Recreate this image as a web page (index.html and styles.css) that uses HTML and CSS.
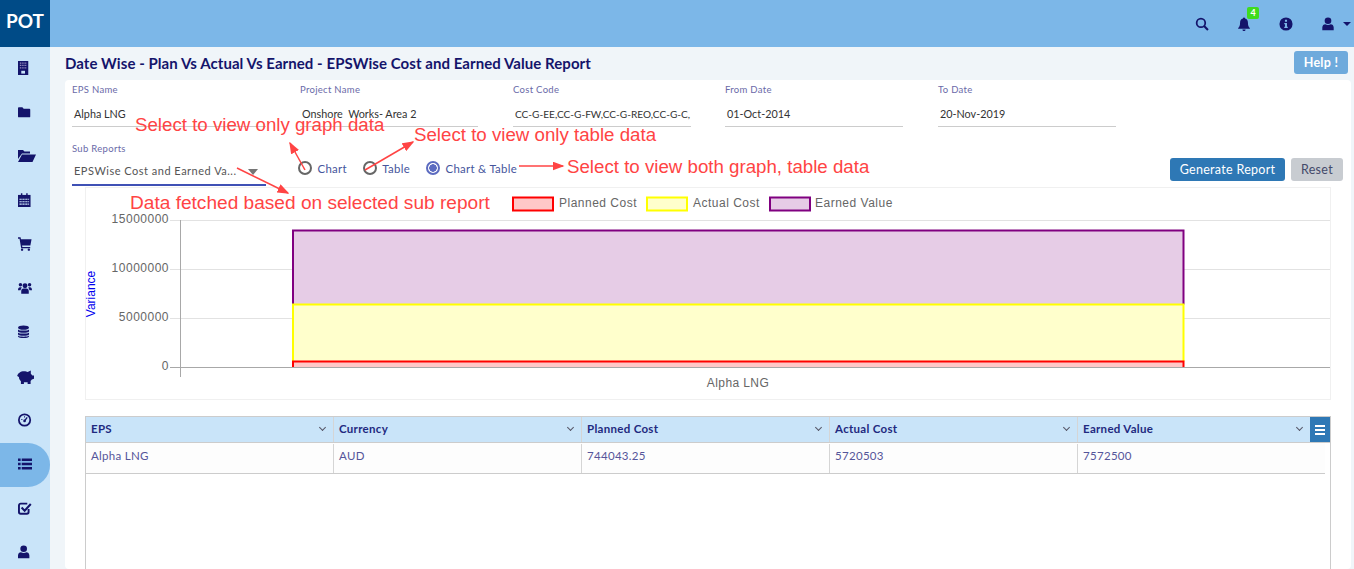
FILE: index.html
```html
<!DOCTYPE html>
<html lang="en">
<head>
    <meta charset="UTF-8">
    <title>Date Wise - Plan Vs Actual Vs Earned</title>
    <link rel="stylesheet" href="styles.css">
</head>
<body>
    <header class="topbar">
        <div class="logo">POT</div>
        <div class="top-icons">
            <svg class="top-icon" viewBox="0 0 16 16"><circle cx="6.8" cy="6.8" r="4.9" fill="none" stroke="#14146b" stroke-width="2"/><path d="M10.400 10.400 14.800 14.800" stroke="#14146b" stroke-width="2.400"/></svg>
            <span class="bell">
                <svg class="top-icon" viewBox="0 0 16 16"><path d="M8 .500a1.200 1.200 0 0 1 1.200 1.300C11.500 2.400 12.500 4.300 12.500 6.500c0 3.500.8 4.700 2.200 6V13.500H1.300v-1c1.400-1.300 2.200-2.500 2.200-6 0-2.200 1-4.100 3.300-4.700A1.200 1.200 0 0 1 8 .500ZM6.200 14.300h3.600a1.800 1.800 0 0 1-3.600 0Z" fill="#14146b"/></svg>
                <span class="badge">4</span>
            </span>
            <svg class="top-icon" viewBox="0 0 16 16"><path fill-rule="evenodd" d="M8 .500a7.500 7.500 0 1 1 0 15A7.500 7.500 0 0 1 8 .500ZM6.800 3v2.300h2.400V3ZM6 6.800v1.400h.9v3H6v1.400h4v-1.400h-.9V6.800Z" fill="#14146b"/></svg>
            <span class="user-menu">
                <svg class="top-icon" viewBox="0 0 16 16"><circle cx="8" cy="4.300" r="3.800" fill="#14146b"/><path d="M1.500 15v-3c0-2.300 1.600-3.700 3.400-3.700 1.800 1.100 4.400 1.100 6.200 0 1.800 0 3.400 1.400 3.400 3.700v3Z" fill="#14146b"/></svg>
                <span class="caret"></span>
            </span>
        </div>
    </header>

    <div class="layout">
        <nav class="sidebar">
            <a class="nav-item"><svg class="nav-icon" viewBox="2.500 .5 15 15"><path d="M2.500 .5h11v15h-11z" fill="#14146b"/><path d="M4.500 2.800h7M4.500 5.300h7M4.500 7.800h7" stroke="#9a8fc0" stroke-width="1.300" stroke-dasharray="1.200 .7"/><path d="M6 11h4v3H6z" fill="#c9e4f9"/></svg></a>
            <a class="nav-item"><svg class="nav-icon" viewBox="1 0 16 16"><path d="M1 3.500a1 1 0 0 1 1-1h4l1.500 1.800H14a1 1 0 0 1 1 1V13a1 1 0 0 1-1 1H2a1 1 0 0 1-1-1Z" fill="#14146b"/></svg></a>
            <a class="nav-item"><svg class="nav-icon-open" viewBox="0 0 18 14"><path d="M0 1h5l1.500 1.500H12v2H4L0 10ZM4 5.500h14L14.500 13H0Z" fill="#14146b"/></svg></a>
            <a class="nav-item"><svg class="nav-icon" viewBox="1.500 .5 14.500 14.500"><path d="M1.500 2.500h13V15h-13z" fill="#14146b"/><path d="M4.500 .8h1.500v2.700H4.500zM10 .8h1.500v2.700H10z" fill="#14146b"/><path d="M3 7h10M3 9.500h10M3 12h10" stroke="#c9e4f9" stroke-width="1.100" stroke-dasharray="2.400 .6"/></svg></a>
            <a class="nav-item"><svg class="nav-icon" viewBox=".5 .5 15.500 15.500"><path d="M.5 .8h2.800L3.800 3H15.500l-1.300 7H5l.3 1.500h8.700V13H4L2.200 2.300H.5Z" fill="#14146b"/><circle cx="5" cy="14.500" r="1.300" fill="#14146b"/><circle cx="12.500" cy="14.500" r="1.300" fill="#14146b"/></svg></a>
            <a class="nav-item"><svg class="nav-icon" viewBox="0 0 16 16"><circle cx="8" cy="5.500" r="2.800" fill="#14146b"/><circle cx="2.800" cy="4.300" r="2" fill="#14146b"/><circle cx="13.200" cy="4.300" r="2" fill="#14146b"/><path d="M3.700 14.500v-3C3.700 9.500 5 8.600 6.300 8.600h3.400c1.300 0 2.600.9 2.600 2.900v3ZM0 10.500c0-2.300.8-3.400 2.300-3.400h2L2.800 10.500ZM16 10.500c0-2.300-.8-3.400-2.300-3.400h-2l1.500 3.400Z" fill="#14146b"/></svg></a>
            <a class="nav-item"><svg class="nav-icon" viewBox="1.700 0 16 16"><ellipse cx="8" cy="3" rx="6.300" ry="2.500" fill="#14146b"/><path d="M1.700 5c1 1.800 11.600 1.800 12.600 0v2.300c-1 2-11.600 2-12.600 0ZM1.700 8.500c1 1.800 11.600 1.800 12.600 0v2.300c-1 2-11.600 2-12.600 0ZM1.700 12c1 1.800 11.600 1.800 12.600 0v1c-1 2.600-11.600 2.600-12.600 0Z" fill="#14146b"/></svg></a>
            <a class="nav-item"><svg class="nav-icon-pig" viewBox="0 0 16 16"><path d="M.2 7.500c.5-2.500 3-4.500 6.500-4.500 1.500 0 2.500.3 3.300.8L13 2.300v3l1.500 1.700H16v3l-2 .8-1.200 1.500v2.700h-2.800v-1.500H6.500v1.500H3.700v-2.500C2.500 11.300 1.800 10 1.800 8.500Z" fill="#14146b"/></svg></a>
            <a class="nav-item"><svg class="nav-icon" viewBox=".5 0 16 16"><circle cx="8" cy="8" r="6.500" fill="none" stroke="#14146b" stroke-width="2"/><path d="M8 9 11 5" stroke="#14146b" stroke-width="1.600"/><circle cx="8" cy="9" r="1.500" fill="#14146b"/><path d="M4.300 7.500h1.200M7.400 4.400h1.200" stroke="#14146b" stroke-width="1.200"/></svg></a>
            <a class="nav-item active"><svg class="nav-icon" viewBox=".5 .5 15 15"><path d="M.5 2h2.800v2.800H.5zM.5 6.600h2.800v2.800H.5zM.5 11.200h2.800V14H.5zM4.500 2h11v2.800h-11zM4.500 6.600h11v2.800h-11zM4.500 11.200h11V14h-11z" fill="#14146b"/></svg></a>
            <a class="nav-item"><svg class="nav-icon" viewBox=".4 0 16 16"><path d="M12.500 9v3.500a2 2 0 0 1-2 2H3.500a2 2 0 0 1-2-2V5a2 2 0 0 1 2-2h7.500" fill="none" stroke="#14146b" stroke-width="2.200"/><path d="M4.500 7.500 8 11 15 3.500" fill="none" stroke="#14146b" stroke-width="2.400"/></svg></a>
            <a class="nav-item"><svg class="nav-icon" viewBox="1.500 0 16 16"><circle cx="8" cy="4.300" r="3.800" fill="#14146b"/><path d="M1.500 15v-3c0-2.300 1.600-3.700 3.400-3.700 1.800 1.100 4.400 1.100 6.200 0 1.800 0 3.400 1.400 3.400 3.700v3Z" fill="#14146b"/></svg></a>
        </nav>

        <main class="content">
            <div class="page-head">
                <h1>Date Wise - Plan Vs Actual Vs Earned - EPSWise Cost and Earned Value Report</h1>
                <button class="btn-help">Help !</button>
            </div>

            <section class="card">
                <div class="filters">
                    <div class="field field-first">
                        <label>EPS Name</label>
                        <div class="value">Alpha LNG</div>
                    </div>
                    <div class="field">
                        <label>Project Name</label>
                        <div class="value">Onshore&nbsp; Works- Area 2</div>
                    </div>
                    <div class="field">
                        <label>Cost Code</label>
                        <div class="value value-code">CC-G-EE,CC-G-FW,CC-G-REO,CC-G-C,</div>
                    </div>
                    <div class="field">
                        <label>From Date</label>
                        <div class="value">01-Oct-2014</div>
                    </div>
                    <div class="field">
                        <label>To Date</label>
                        <div class="value">20-Nov-2019</div>
                    </div>
                </div>

                <div class="options">
                    <div class="field field-first">
                        <label>Sub Reports</label>
                        <div class="value value-select">EPSWise Cost and Earned Va...<span class="select-arrow"></span></div>
                    </div>
                    <div class="radios">
                        <span class="radio"><i class="dot"></i>Chart</span>
                        <span class="radio"><i class="dot"></i>Table</span>
                        <span class="radio checked"><i class="dot"></i>Chart &amp; Table</span>
                    </div>
                    <div class="actions">
                        <button class="btn-generate">Generate Report</button>
                        <button class="btn-reset">Reset</button>
                    </div>
                </div>

                <div class="chart">
                    <svg width="1246" height="213" viewBox="85 187 1246 213">
                        <g class="legend-box">
                            <rect x="513" y="197.500" width="40" height="13" fill="#ffc8c8" stroke="#f00" stroke-width="2"/>
                            <rect x="647" y="197.500" width="40" height="13" fill="#ffffcc" stroke="#ff0" stroke-width="2"/>
                            <rect x="770" y="197.500" width="40" height="13" fill="#e6cce6" stroke="#800080" stroke-width="2"/>
                        </g>
                        <text class="legend-text" x="559" y="206.500">Planned Cost</text>
                        <text class="legend-text" x="693" y="206.500">Actual Cost</text>
                        <text class="legend-text" x="815" y="206.500">Earned Value</text>

                        <path d="M170 220.500H1330M170 269.500H1330M170 318.500H1330" stroke="#e2e2e2"/>
                        <rect x="293" y="230.500" width="890" height="74" fill="#e6cce6"/>
                        <rect x="293" y="304.500" width="890" height="57" fill="#ffffcc"/>
                        <rect x="293" y="361.500" width="890" height="6" fill="#ffc8c8"/>
                        <path d="M293 304.500V230.500H1183.500V304.500" fill="none" stroke="#800080" stroke-width="2"/>
                        <path d="M293 361.500V304.500H1183.500V361.500" fill="none" stroke="#ff0" stroke-width="2"/>
                        <path d="M293 367V361.500H1183.500V367" fill="none" stroke="#f00" stroke-width="2"/>
                        <path d="M180.500 220V377M170 367.500H1330" stroke="#a8a8a8"/>

                        <text class="tick" x="169" y="223">15000000</text>
                        <text class="tick" x="169" y="272">10000000</text>
                        <text class="tick" x="169" y="321">5000000</text>
                        <text class="tick" x="169" y="370">0</text>
                        <text class="axis-title" transform="translate(95 294) rotate(-90)">Variance</text>
                        <text class="x-label" x="738" y="387">Alpha LNG</text>
                    </svg>
                </div>

                <div class="grid">
                    <div class="grid-head">
                        <div class="col">EPS<span class="chev"></span></div>
                        <div class="col">Currency<span class="chev"></span></div>
                        <div class="col">Planned Cost<span class="chev"></span></div>
                        <div class="col">Actual Cost<span class="chev"></span></div>
                        <div class="col">Earned Value<span class="chev"></span></div>
                        <div class="grid-menu"><span></span><span></span><span></span></div>
                    </div>
                    <div class="grid-row">
                        <div class="col">Alpha LNG</div>
                        <div class="col">AUD</div>
                        <div class="col">744043.25</div>
                        <div class="col">5720503</div>
                        <div class="col">7572500</div>
                    </div>
                </div>
            </section>
        </main>
    </div>

    <!-- annotations drawn over the screenshot -->
    <div class="note note-graph">Select to view only graph data</div>
    <div class="note note-table">Select to view only table data</div>
    <div class="note note-both">Select to view both graph, table data</div>
    <div class="note note-data">Data fetched based on selected sub report</div>
    <svg class="arrows" width="1354" height="569">
        <defs>
            <marker id="head" markerWidth="8" markerHeight="6" refX="7" refY="3" orient="auto">
                <path d="M0 0 8 3 0 6Z" fill="#f44"/>
            </marker>
        </defs>
        <path d="M305 170 290 143" marker-end="url(#head)"/>
        <path d="M365 170 413 142" marker-end="url(#head)"/>
        <path d="M519 166H563" marker-end="url(#head)"/>
        <path d="M237 168 288 193" marker-end="url(#head)"/>
    </svg>
</body>
</html>
```

FILE: styles.css
```css
html, body {
    margin: 0;
    height: 100%;
    overflow: hidden;
}

body {
    position: relative;
    font-family: 'Lato', sans-serif;
    background: #f0f5f9;
    color: #14146b;
}

.topbar {
    display: flex;
    justify-content: space-between;
    height: 47px;
    background: #7cb7e8;
}

.logo {
    width: 50px;
    background: #004b87;
    color: #fff;
    font-size: 19px;
    font-weight: bold;
    line-height: 41px;
    text-align: center;
}

.top-icons {
    display: flex;
    align-items: center;
    gap: 28px;
    padding-right: 3px;
}

.top-icon {
    display: block;
    width: 14px;
    height: 14px;
}

.bell {
    position: relative;
}

.badge {
    position: absolute;
    top: -10px;
    left: 10px;
    width: 12px;
    height: 12px;
    border-radius: 2px;
    background: #3fdc1e;
    color: #fff;
    font-size: 9px;
    font-weight: bold;
    line-height: 12px;
    text-align: center;
}

.user-menu {
    display: flex;
    align-items: center;
    gap: 8px;
}

.caret {
    width: 0;
    height: 0;
    border-left: 4px solid transparent;
    border-right: 4px solid transparent;
    border-top: 4px solid #14146b;
}

.layout {
    display: flex;
    height: 522px;
}

.sidebar {
    flex: 0 0 50px;
    background: #c9e4f9;
}

.nav-item {
    display: flex;
    align-items: center;
    height: 44px;
    padding-left: 18px;
}

.nav-item.active {
    background: #7cb7e8;
    border-radius: 0 22px 22px 0;
}

.nav-icon {
    width: 14px;
    height: 14px;
    margin-top: -2px;
}

.nav-icon-open {
    width: 18px;
    height: 14px;
    margin-top: -2px;
}

.nav-icon-pig {
    width: 17px;
    height: 17px;
    margin: -2px 0 0 -1px;
}

.content {
    flex: 1;
    padding: 4px 3px 0 15px;
    min-width: 0;
}

.page-head {
    display: flex;
    justify-content: space-between;
    align-items: center;
    height: 23px;
    margin: 0 3px 6px 0;
}

h1 {
    margin: 0;
    font-size: 15px;
    font-weight: bold;
    letter-spacing: 0.06px;
    color: #14146b;
}

button {
    border: none;
    border-radius: 3px;
    font-family: 'Lato', sans-serif;
    font-size: 12.5px;
    cursor: pointer;
}

.btn-help {
    width: 54px;
    height: 23px;
    background: #6eaadc;
    color: #fff;
    font-weight: bold;
    letter-spacing: 0.3px;
}

.card {
    height: 489px;
    padding: 0 7px;
    background: #fff;
    border-radius: 4px;
}

.filters {
    display: grid;
    grid-template-columns: 228px 213px 212px 213px 213px;
    padding-top: 4px;
}

.field label {
    display: block;
    height: 12px;
    font-size: 9.5px;
    line-height: 12px;
    letter-spacing: 0.3px;
    color: #6a6aa8;
}

.value {
    width: 178px;
    height: 31px;
    padding-left: 2px;
    box-sizing: border-box;
    font-size: 10.8px;
    line-height: 36px;
    color: #333;
    border-bottom: 1px solid #ccc;
    white-space: nowrap;
    overflow: hidden;
}

.value-code {
    font-size: 10.1px;
}

.field-first .value {
    width: 194px;
}

.options {
    display: flex;
    align-items: flex-start;
    padding-top: 16px;
}

.options .field {
    flex: 0 0 226px;
}

.field-first .value-select {
    position: relative;
    height: 31px;
    font-size: 11px;
    line-height: 32px;
    letter-spacing: 0.5px;
    color: #555;
    border-bottom: 2px solid #3f51b5;
}

.select-arrow {
    position: absolute;
    right: 8px;
    top: 14px;
    border-left: 5px solid transparent;
    border-right: 5px solid transparent;
    border-top: 6px solid #757575;
}

.radios {
    display: flex;
    gap: 16px;
    padding-top: 17px;
    color: #45559c;
    font-size: 11.4px;
    letter-spacing: 0.3px;
}

.radio {
    display: flex;
    align-items: center;
    gap: 5.5px;
    height: 16px;
    white-space: nowrap;
}

.dot {
    width: 10px;
    height: 10px;
    border: 2px solid #666;
    border-radius: 50%;
}

.checked .dot {
    border-color: #5c6bc0;
    background: radial-gradient(circle, #5c6bc0 0 3.5px, transparent 4px);
}

.actions {
    display: flex;
    gap: 6px;
    margin-left: auto;
    margin-right: 1px;
    padding-top: 15px;
}

.btn-generate {
    width: 115px;
    height: 23px;
    background: #2e78b5;
    color: #fff;
    letter-spacing: 0.3px;
}

.btn-reset {
    width: 52px;
    height: 23px;
    background: #c8ccd1;
    color: #444a6a;
    letter-spacing: 0.3px;
}

.chart {
    margin: 1px 0 0 13px;
    width: 1246px;
    height: 213px;
    box-shadow: inset 0 0 0 1px #f0f0f0;
}

.chart svg {
    display: block;
}

.legend-text {
    font-family: 'Liberation Sans', sans-serif;
    font-size: 12px;
    letter-spacing: 0.5px;
    fill: #666;
}

.tick {
    font-family: 'Liberation Sans', sans-serif;
    font-size: 12px;
    letter-spacing: 0.5px;
    fill: #666;
    text-anchor: end;
}

.axis-title {
    font-family: 'Liberation Sans', sans-serif;
    font-size: 12px;
    fill: #00e;
    text-anchor: middle;
}

.x-label {
    font-family: 'Liberation Sans', sans-serif;
    font-size: 12px;
    letter-spacing: 0.4px;
    fill: #666;
    text-anchor: middle;
}

.grid {
    margin: 16px 0 0 13px;
    width: 1246px;
    height: 160px;
    box-sizing: border-box;
    border: 1px solid #ccc;
    border-bottom: none;
    font-size: 11.5px;
    letter-spacing: 0.3px;
}

.grid-head, .grid-row {
    display: grid;
    grid-template-columns: 248px 248px 248px 248px 1fr;
}

.grid-head {
    position: relative;
    height: 26px;
    background: #c9e4f9;
    border-bottom: 1px solid #ccc;
    box-sizing: border-box;
    font-weight: bold;
    color: #1f2a80;
    line-height: 24px;
}

.grid-head .col {
    position: relative;
    padding-left: 5px;
    border-right: 1px solid #d5d5d5;
    box-sizing: border-box;
}

.grid-head .col:nth-child(5) {
    border-right: none;
}

.chev {
    position: absolute;
    right: 8px;
    top: 8px;
    width: 4px;
    height: 4px;
    border-right: 1px solid #556;
    border-bottom: 1px solid #556;
    transform: rotate(45deg);
}

.grid-head .col:nth-child(5) .chev {
    right: 28px;
}

.grid-menu {
    position: absolute;
    top: 0;
    right: 0;
    width: 20px;
    height: 25px;
    background: #2e78b5;
    display: flex;
    flex-direction: column;
    align-items: center;
    justify-content: center;
    gap: 2px;
}

.grid-menu span {
    width: 10px;
    height: 2px;
    background: #fff;
}

.grid-row {
    height: 31px;
    width: 1239px;
    box-sizing: border-box;
    background: #fdfdfd;
    border-bottom: 1px solid #ccc;
    color: #55559a;
    line-height: 24px;
}

.grid-row .col {
    margin-top: 1px;
    padding-left: 5px;
    border-right: 1px solid #d5d5d5;
    box-sizing: border-box;
}

.grid-row .col:nth-child(5) {
    border-right: none;
}

.note {
    position: absolute;
    font-family: 'Liberation Sans', sans-serif;
    font-size: 18.7px;
    line-height: 21px;
    color: #f44;
    white-space: nowrap;
}

.note-graph { left: 135px; top: 114px; }
.note-table { left: 414px; top: 124px; }
.note-both { left: 567px; top: 156px; }
.note-data { left: 130px; top: 192px; font-size: 19.1px; }

.arrows {
    position: absolute;
    top: 0;
    left: 0;
    pointer-events: none;
}

.arrows path {
    fill: none;
    stroke: #f44;
    stroke-width: 1.5;
}

.arrows marker path {
    fill: #f44;
    stroke: none;
}
```
